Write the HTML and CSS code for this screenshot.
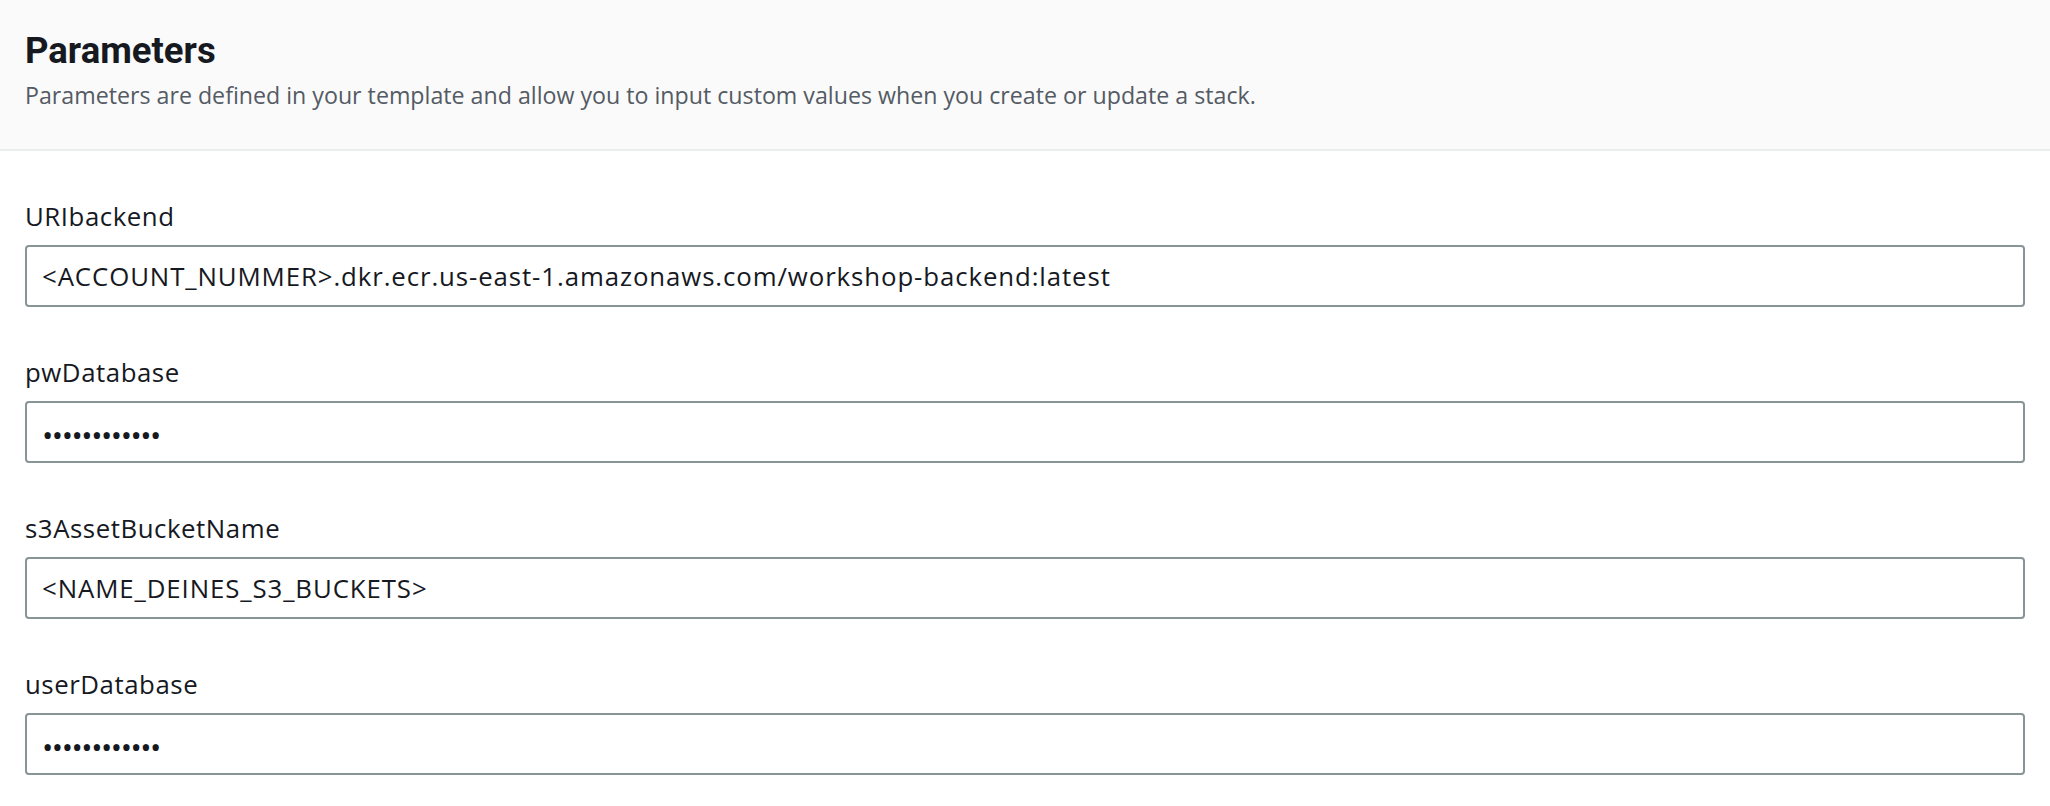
FILE: index.html
```html
<!DOCTYPE html>
<html lang="en">
<head>
<meta charset="utf-8">
<title>Parameters</title>
<link rel="stylesheet" href="styles.css">
</head>
<body>
<section class="panel">
  <header class="panel-header">
    <h2 class="panel-title">Parameters</h2>
    <p class="panel-desc">Parameters are defined in your template and allow you to input custom values when you create or update a stack.</p>
  </header>
  <div class="panel-body">
    <div class="field">
      <label class="field-label" for="p1">URIbackend</label>
      <input class="field-input" id="p1" type="text" value="&lt;ACCOUNT_NUMMER&gt;.dkr.ecr.us-east-1.amazonaws.com/workshop-backend:latest">
    </div>
    <div class="field">
      <label class="field-label" for="p2">pwDatabase</label>
      <input class="field-input pw" id="p2" type="password" value="aaaaaaaaaaaa">
    </div>
    <div class="field">
      <label class="field-label" for="p3">s3AssetBucketName</label>
      <input class="field-input" id="p3" type="text" value="&lt;NAME_DEINES_S3_BUCKETS&gt;">
    </div>
    <div class="field">
      <label class="field-label" for="p4">userDatabase</label>
      <input class="field-input pw" id="p4" type="password" value="aaaaaaaaaaaa">
    </div>
  </div>
</section>
</body>
</html>
```
FILE: styles.css
```css
html, body {
  margin: 0;
  padding: 0;
  background: #ffffff;
}

body {
  font-family: "Open Sans", Roboto, sans-serif;
  color: #16191f;
}

.panel-header {
  background: #fafafa;
  border-bottom: 2px solid #eaeded;
  padding: 29px 25px 38px 25px;
}

.panel-title {
  margin: 0;
  font-family: Roboto, "Open Sans", sans-serif;
  font-size: 36.5px;
  line-height: 44px;
  font-weight: 700;
  color: #16191f;
}

.panel-desc {
  margin: 6px 0 0 0;
  font-size: 23.2px;
  line-height: 32px;
  color: #545b64;
}

.panel-body {
  padding: 48px 25px 0 25px;
  display: flex;
  flex-direction: column;
  gap: 48px;
}

.field {
  display: flex;
  flex-direction: column;
}

.field-label {
  font-size: 25.8px;
  line-height: 34px;
  letter-spacing: 0.55px;
  color: #16191f;
  margin-bottom: 12px;
}

.field-input {
  box-sizing: border-box;
  width: 100%;
  height: 62px;
  margin: 0;
  padding: 0 15px;
  border: 2px solid #879596;
  border-radius: 4px;
  background: #ffffff;
  font-family: "Open Sans", Roboto, sans-serif;
  font-size: 25.8px;
  letter-spacing: 0.9px;
  color: #16191f;
  outline: none;
}

.field-input.pw {
  font-size: 30px;
  letter-spacing: -1.45px;
  padding-top: 4px;
}
```
